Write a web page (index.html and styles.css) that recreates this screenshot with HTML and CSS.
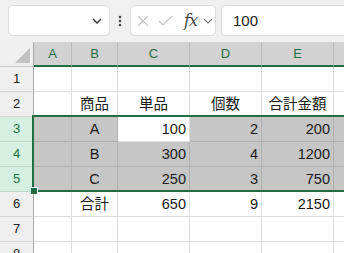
FILE: index.html
```html
<!DOCTYPE html>
<html lang="ja">
<head>
    <meta charset="UTF-8">
    <title>Sheet</title>
    <link rel="stylesheet" href="styles.css">
</head>
<body>
    <div class="toolbar">
        <div class="namebox">
            <svg class="chev" width="10" height="6" viewBox="0 0 10 6"><path d="M1 1l4 4 4-4" fill="none" stroke="#333" stroke-width="1.4"/></svg>
        </div>
        <div class="dots">
            <svg width="4" height="12" viewBox="0 0 4 12"><circle cx="2" cy="2" r="1.3" fill="#444"/><circle cx="2" cy="6" r="1.3" fill="#444"/><circle cx="2" cy="10" r="1.3" fill="#444"/></svg>
        </div>
        <div class="fbuttons">
            <svg width="12" height="12" viewBox="0 0 12 12"><path d="M1 1l10 10M11 1L1 11" stroke="#c4c4c4" stroke-width="1.2"/></svg>
            <svg width="15" height="11" viewBox="0 0 15 11"><path d="M1 6l4 4 9-9" fill="none" stroke="#c4c4c4" stroke-width="1.2"/></svg>
            <span class="fx">fx</span>
            <svg class="fchev" width="10" height="6" viewBox="0 0 10 6"><path d="M1 1l4 4 4-4" fill="none" stroke="#777" stroke-width="1.1"/></svg>
        </div>
        <div class="finput">100</div>
    </div>

    <div class="sheet">
        <div class="grid">
            <div class="corner"><span class="tri"></span></div>
            <div class="ch">A</div>
            <div class="ch">B</div>
            <div class="ch">C</div>
            <div class="ch">D</div>
            <div class="ch">E</div>
            <div class="ch">&nbsp;</div>

            <div class="rh">1</div>
            <div class="cell"></div><div class="cell"></div><div class="cell"></div><div class="cell"></div><div class="cell"></div><div class="cell"></div>

            <div class="rh">2</div>
            <div class="cell"></div>
            <div class="cell ctr">商品</div>
            <div class="cell ctr">単品</div>
            <div class="cell ctr">個数</div>
            <div class="cell ctr">合計金額</div>
            <div class="cell"></div>

            <div class="rh on">3</div>
            <div class="cell sel"></div>
            <div class="cell sel ctr">A</div>
            <div class="cell num">100</div>
            <div class="cell sel num">2</div>
            <div class="cell sel num">200</div>
            <div class="cell sel"></div>

            <div class="rh on">4</div>
            <div class="cell sel"></div>
            <div class="cell sel ctr">B</div>
            <div class="cell sel num">300</div>
            <div class="cell sel num">4</div>
            <div class="cell sel num">1200</div>
            <div class="cell sel"></div>

            <div class="rh on">5</div>
            <div class="cell sel"></div>
            <div class="cell sel ctr">C</div>
            <div class="cell sel num">250</div>
            <div class="cell sel num">3</div>
            <div class="cell sel num">750</div>
            <div class="cell sel"></div>

            <div class="rh">6</div>
            <div class="cell"></div>
            <div class="cell ctr">合計</div>
            <div class="cell num">650</div>
            <div class="cell num">9</div>
            <div class="cell num">2150</div>
            <div class="cell"></div>

            <div class="rh">7</div>
            <div class="cell"></div><div class="cell"></div><div class="cell"></div><div class="cell"></div><div class="cell"></div><div class="cell"></div>

            <div class="rh">8</div>
            <div class="cell"></div><div class="cell"></div><div class="cell"></div><div class="cell"></div><div class="cell"></div><div class="cell"></div>
        </div>
        <div class="selection"></div>
        <div class="handle"></div>
    </div>
</body>
</html>
```

FILE: styles.css
```css
body {
    margin: 0;
    width: 344px;
    height: 253px;
    overflow: hidden;
    background-color: #fff;
    font-family: "Liberation Sans", "Noto Sans CJK JP", sans-serif;
    color: #1a1a1a;
}

.toolbar {
    height: 42px;
    background-color: #f0f0f0;
    display: flex;
    align-items: flex-start;
    padding: 5px 0 0 8px;
    box-sizing: border-box;
}

.namebox {
    width: 100px;
    height: 29px;
    background-color: #fff;
    border: 1px solid #dcdcdc;
    border-radius: 5px;
    display: flex;
    align-items: center;
    justify-content: flex-end;
    padding-right: 7px;
    box-sizing: border-box;
    width: 102px;
    height: 31px;
}

.dots {
    width: 20px;
    height: 31px;
    display: flex;
    align-items: center;
    justify-content: center;
}

.fbuttons {
    width: 86px;
    height: 31px;
    background-color: #fff;
    border: 1px solid #dcdcdc;
    border-radius: 5px;
    box-sizing: border-box;
    display: flex;
    align-items: center;
    padding-left: 6px;
    gap: 9px;
}

.fx {
    font-family: "DejaVu Serif", "Liberation Serif", serif;
    font-style: italic;
    font-size: 16px;
    color: #444;
    margin-left: 2px;
    letter-spacing: -1px;
}

.fchev {
    margin-left: -3px;
}

.finput {
    flex: 1;
    height: 31px;
    margin-left: 5px;
    background-color: #fff;
    border: 1px solid #dcdcdc;
    border-right: none;
    border-radius: 5px 0 0 5px;
    box-sizing: border-box;
    padding-left: 11px;
    font-size: 15px;
    line-height: 29px;
    color: #222;
}

.sheet {
    position: relative;
    height: 211px;
    overflow: hidden;
}

.grid {
    display: grid;
    grid-template-columns: 34px 38px 46px 72px 72px 72px 72px;
    grid-auto-rows: 25px;
}

.grid > div {
    box-sizing: border-box;
}

.corner {
    background-color: #efefef;
    border-right: 1px solid #a8a8a8;
    border-bottom: 1px solid #c8c8c8;
    position: relative;
}

.tri {
    position: absolute;
    right: 3px;
    bottom: 3px;
    width: 0;
    height: 0;
    border-left: 15px solid transparent;
    border-bottom: 15px solid #c2c2c2;
}

.ch {
    background-color: #d2d2d2;
    border-right: 1px solid #bababa;
    border-bottom: 2px solid #1f6e43;
    color: #1f6e43;
    font-size: 13px;
    text-align: center;
    line-height: 23px;
}

.rh {
    background-color: #efefef;
    border-right: 1px solid #a8a8a8;
    border-bottom: 1px solid #d4d4d4;
    font-size: 13px;
    text-align: center;
    line-height: 24px;
    color: #222;
}

.rh.on {
    background-color: #d3f0e0;
    color: #1f6e43;
    border-bottom-color: #b9d9c6;
}

.cell {
    border-right: 1px solid #dedede;
    border-bottom: 1px solid #dedede;
    font-size: 14.5px;
    line-height: 24px;
    padding: 0 3px;
    white-space: nowrap;
}

.cell.sel {
    background-color: #c6c6c6;
    border-color: #b0b0b0;
}

.num {
    text-align: right;
}

.ctr {
    text-align: center;
}

.selection {
    position: absolute;
    left: 32px;
    top: 73px;
    width: 340px;
    height: 77px;
    border: 2px solid #1f6e43;
    box-sizing: border-box;
    pointer-events: none;
}

.handle {
    position: absolute;
    left: 31px;
    top: 145px;
    width: 6px;
    height: 6px;
    background-color: #1f6e43;
    border-right: 1px solid #fff;
    border-top: 1px solid #fff;
}
```
